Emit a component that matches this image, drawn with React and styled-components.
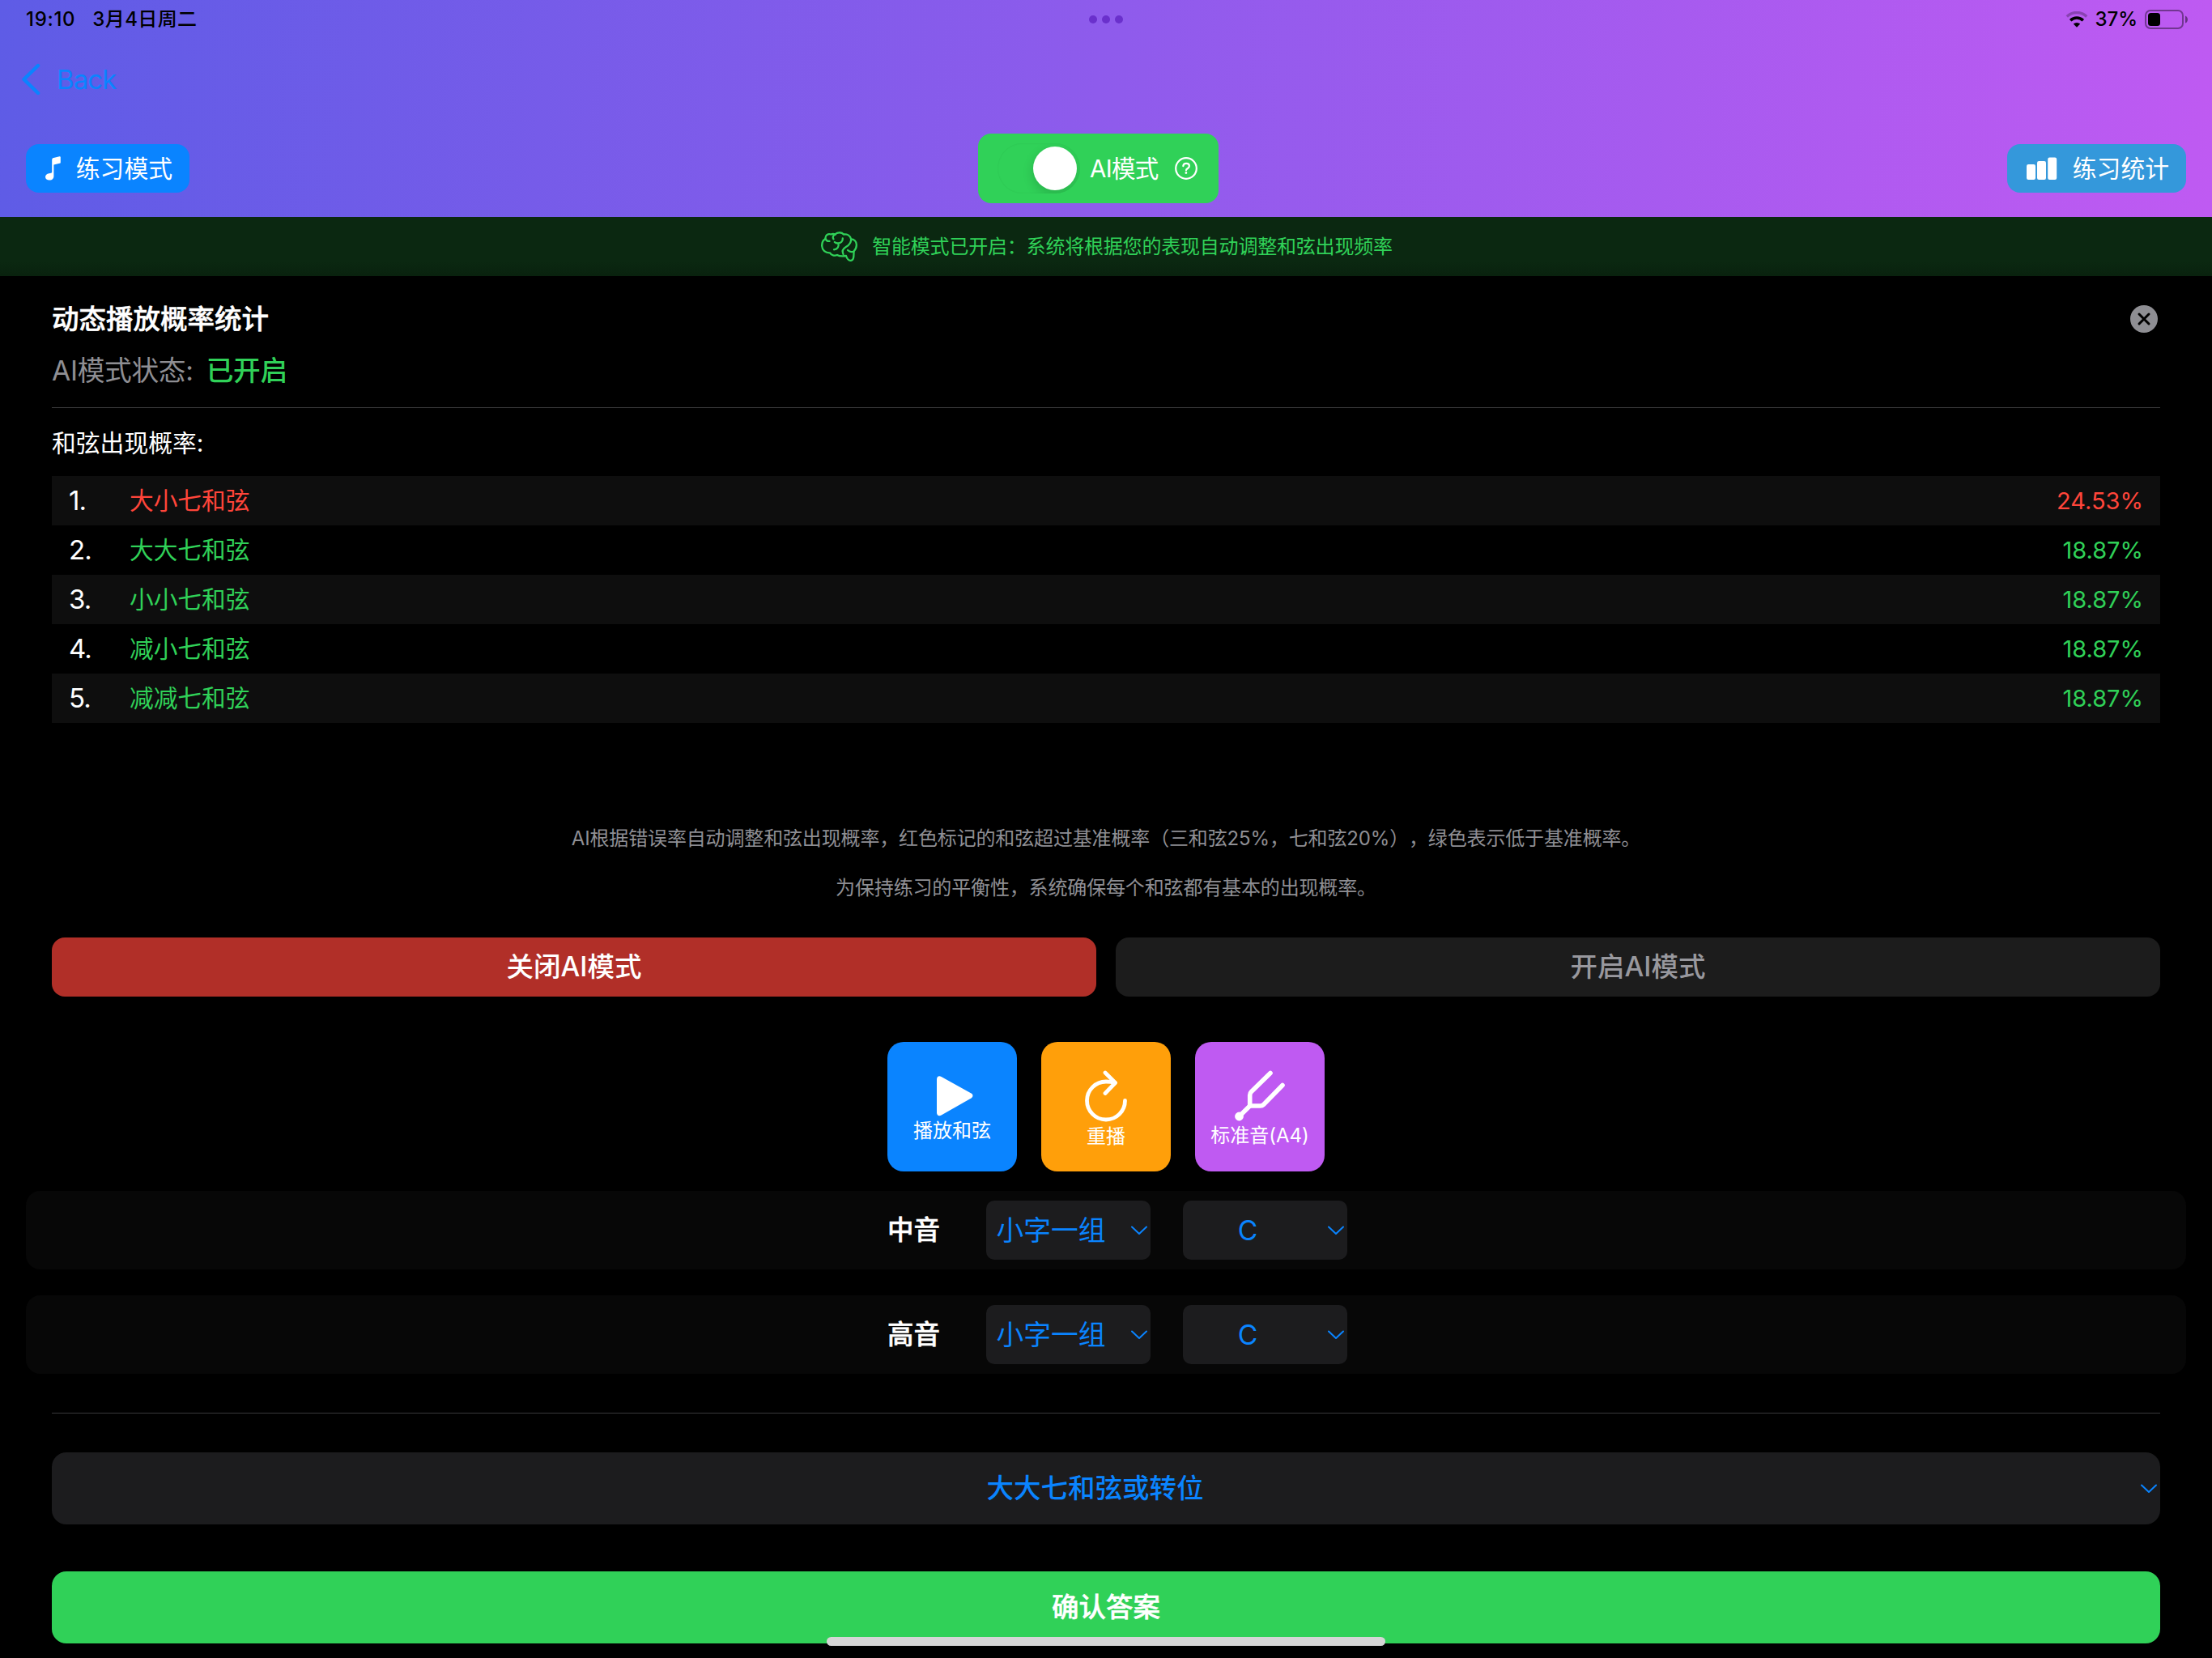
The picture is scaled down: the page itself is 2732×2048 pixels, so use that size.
import { useState } from "react";
import styled, { createGlobalStyle } from "styled-components";

const GlobalStyle = createGlobalStyle`
  * {
    box-sizing: border-box;
  }
  body {
    margin: 0;
    background: #000;
    font-family: Inter, "Noto Sans CJK SC", sans-serif;
    color: #fff;
  }
  button {
    border: none;
    padding: 0;
    margin: 0;
    font: inherit;
    color: inherit;
    background: none;
  }
  svg {
    display: block;
    flex: none;
  }
`;

const Screen = styled.div`
  position: relative;
  width: 2732px;
  height: 2048px;
  overflow: hidden;
  background: #000;
`;

const Header = styled.header`
  height: 268px;
  background: linear-gradient(95.6deg, #5e5ce6, #bf5af2);
`;

const StatusBar = styled.div`
  display: grid;
  grid-template-columns: 1fr auto 1fr;
  align-items: center;
  height: 48px;
  padding: 0 29px;
  color: #000;
  font-size: 24px;
  font-weight: 500;
  line-height: 48px;
`;

const StatusLeft = styled.div`
  display: flex;
  gap: 21px;
  padding-left: 3px;
  letter-spacing: 0.4px;
`;

const Clock = styled.span`
  letter-spacing: 0.7px;
`;

const StatusRight = styled.div`
  display: flex;
  justify-content: flex-end;
  align-items: center;
`;

const Battery = styled.span`
  margin: 0 9px 0 8px;
`;

const Dots = styled.div`
  display: flex;
  gap: 6px;
  span {
    width: 10px;
    height: 10px;
    border-radius: 50%;
    background: #6a30cc;
  }
`;

const NavBar = styled.nav`
  display: flex;
  align-items: center;
  height: 100px;
  padding-left: 26px;
`;

const BackButton = styled.button`
  display: flex;
  align-items: center;
  gap: 20px;
  color: #0a84ff;
  font-size: 33px;
  line-height: 40px;
  letter-spacing: -0.9px;
`;

const Toolbar = styled.div`
  display: flex;
  justify-content: space-between;
  align-items: center;
  height: 120px;
  padding: 0 32px;
`;

const ToolButton = styled.button`
  display: flex;
  align-items: center;
  justify-content: space-between;
  width: ${(props) => props.$width}px;
  height: 60px;
  padding: 0 21px 0 24px;
  border-radius: 16px;
  background: ${(props) => props.$color};
  font-size: 29.8px;
  line-height: 40px;
`;

const AiToggle = styled.button`
  display: flex;
  align-items: center;
  width: 297px;
  height: 86px;
  padding: 0 26px 0 24px;
  border-radius: 16px;
  background: #30d158;
  font-size: 29.5px;
  line-height: 40px;
`;

const Track = styled.span`
  display: flex;
  justify-content: ${(props) => (props.$on ? "flex-end" : "flex-start")};
  width: 102px;
  height: 62px;
  padding: 4px;
  margin-right: 12px;
  border-radius: 31px;
  background: #30d158;
  box-shadow: inset 0 0 2px rgba(0, 0, 0, 0.08);
  overflow: hidden;
`;

const Knob = styled.span`
  width: 54px;
  height: 54px;
  border-radius: 50%;
  background: #fff;
  box-shadow: 0 5px 14px rgba(0, 0, 0, 0.16);
`;

const ToggleLabel = styled.span`
  flex: 1;
  text-align: left;
  letter-spacing: -0.7px;
`;

const Banner = styled.div`
  display: flex;
  justify-content: center;
  align-items: center;
  gap: 18px;
  height: 73px;
  padding-left: 2px;
  background: linear-gradient(#0b2811 75%, #09220e);
  color: #30d158;
  font-size: 24px;
  line-height: 36px;
  letter-spacing: -0.2px;
`;

const Panel = styled.section`
  padding: 28px 64px 0;
`;

const TitleRow = styled.div`
  display: flex;
  justify-content: space-between;
  align-items: center;
  height: 50px;
  padding-right: 3px;
`;

const Title = styled.h2`
  margin: 0;
  font-size: 33.5px;
  font-weight: 500;
  line-height: 50px;
  -webkit-text-stroke: 0.5px currentColor;
`;

const AiStatus = styled.div`
  display: flex;
  gap: 16px;
  margin-top: 12px;
  font-size: 33.7px;
  line-height: 54px;
  color: #8e8e93;
  letter-spacing: -0.3px;
`;

const StatusValue = styled.span`
  color: #30d158;
  font-weight: 500;
`;

const Divider = styled.div`
  height: 1px;
  margin: ${(props) => props.$margin};
  background: #39393b;
`;

const SubTitle = styled.h3`
  margin: 22px 0 20px;
  font-size: 29.8px;
  font-weight: 400;
  line-height: 42px;
`;

const ChordRow = styled.div`
  display: flex;
  align-items: center;
  height: 61px;
  padding: 0 21px;
  font-size: 29.7px;
  line-height: 61px;
  color: ${(props) => (props.$high ? "#ff453a" : "#30d158")};

  &:nth-child(odd) {
    background: #0e0e0e;
  }
`;

const RowIndex = styled.span`
  width: 75px;
  font-size: 33px;
  letter-spacing: -1px;
  color: #fff;
`;

const Percent = styled.span`
  margin-left: auto;
  font-size: 29px;
`;

const Notes = styled.div`
  margin-top: 112px;
  text-align: center;
  text-spacing-trim: space-all;
  color: #8e8e93;
  font-size: 24px;
  line-height: 61px;
  letter-spacing: -0.15px;
`;

const ButtonRow = styled.div`
  display: flex;
  gap: 24px;
  margin-top: 31px;
`;

const ModeButton = styled.button`
  flex: 1;
  height: 73px;
  border-radius: 16px;
  font-size: 33.5px;
  font-weight: 500;
  line-height: 73px;
  background: ${(props) => (props.$danger ? "#b12f28" : "#1c1c1c")};
  color: ${(props) => (props.$danger ? "#fff" : "#98989e")};
`;

const Tiles = styled.div`
  display: flex;
  justify-content: center;
  gap: 30px;
  margin-top: 56px;
`;

const Tile = styled.button`
  display: flex;
  flex-direction: column;
  align-items: center;
  width: 160px;
  height: 160px;
  padding-top: ${(props) => props.$top}px;
  border-radius: 20px;
  background: ${(props) => props.$color};
  font-size: 24px;
  line-height: 36px;
  white-space: nowrap;
`;

const NoteRow = styled.div`
  display: flex;
  justify-content: center;
  align-items: center;
  height: 97px;
  margin: ${(props) => props.$top}px 32px 0;
  padding-left: 28px;
  border-radius: 18px;
  background: #070707;
`;

const NoteLabel = styled.span`
  width: 122px;
  font-size: 32.5px;
  font-weight: 500;
  line-height: 73px;
  -webkit-text-stroke: 0.5px currentColor;
`;

const Picker = styled.button`
  display: flex;
  align-items: center;
  gap: 18px;
  width: 203px;
  height: 73px;
  margin-right: ${(props) => (props.$last ? 0 : 40)}px;
  padding-right: 3px;
  border-radius: 10px;
  background: #1c1c1e;
  color: #0a84ff;
  font-size: 33.7px;
  line-height: 73px;
`;

const PickerText = styled.span`
  flex: 1;
  text-align: center;
`;

const Answer = styled.div`
  padding: 0 64px;
`;

const ChordSelect = styled(Picker)`
  gap: 2px;
  width: 100%;
  height: 89px;
  margin: 0;
  border-radius: 18px;
  font-size: 33.5px;
  font-weight: 500;
`;

const Confirm = styled.button`
  width: 100%;
  height: 89px;
  margin-top: 58px;
  border-radius: 18px;
  background: #30d158;
  font-size: 33.5px;
  font-weight: 500;
  line-height: 89px;
  -webkit-text-stroke: 0.5px currentColor;
`;

const HomeIndicator = styled.div`
  position: absolute;
  left: 50%;
  bottom: 15px;
  width: 690px;
  height: 11px;
  transform: translateX(-50%);
  border-radius: 6px;
  background: #d6d6d6;
`;

const chords = [
  { name: "大小七和弦", rate: "24.53%", high: true },
  { name: "大大七和弦", rate: "18.87%" },
  { name: "小小七和弦", rate: "18.87%" },
  { name: "减小七和弦", rate: "18.87%" },
  { name: "减减七和弦", rate: "18.87%" },
];

const Chevron = () => (
  <svg width="22" height="14" viewBox="0 0 22 14" fill="none">
    <path
      d="M2 2.5 11 11 20 2.5"
      stroke="currentColor"
      strokeWidth="2"
      strokeLinecap="round"
      strokeLinejoin="round"
    />
  </svg>
);

const WifiIcon = () => (
  <svg width="28" height="20" viewBox="0 0 28 20" fill="none">
    <path d="M1.8 6.4A17.6 17.6 0 0 1 26.2 6.4" stroke="#000" strokeOpacity=".26" strokeWidth="3.4" />
    <path d="M6.2 11.2A11.2 11.2 0 0 1 21.8 11.2" stroke="#000" strokeWidth="3.6" />
    <path d="M14 19.8 9.8 15.6a6.2 6.2 0 0 1 8.4 0Z" fill="#000" />
  </svg>
);

const BatteryIcon = () => (
  <svg width="54" height="24" viewBox="0 0 54 24" fill="none">
    <rect x="1" y="1" width="46" height="22" rx="6" stroke="#000" strokeOpacity=".4" strokeWidth="2" />
    <rect x="4" y="4" width="15" height="16" rx="3.5" fill="#000" />
    <path d="M50 7.4c4 1.6 4 7.6 0 9.2Z" fill="#000" fillOpacity=".45" />
  </svg>
);

const BackIcon = () => (
  <svg width="24" height="40" viewBox="0 0 24 40" fill="none">
    <path
      d="M21 3 3.5 20 21 37"
      stroke="currentColor"
      strokeWidth="4.4"
      strokeLinecap="round"
      strokeLinejoin="round"
    />
  </svg>
);

const MusicIcon = () => (
  <svg width="19" height="30" viewBox="0 0 19 30" fill="#fff">
    <path d="M8.2 4.6c0-1.6.6-2.4 2-2.7L17.4.2c.9-.2 1.4.2 1.4 1v6.2c0 .8-.4 1.2-1.2 1.4l-7.2 1.6v14c0 3.2-2.2 5.2-5.4 5.2-2.8 0-5-1.6-5-3.900 0-2.500 1.900-3.900 4.400-4.400l2.600-.5c.9-.2 1.200-.5 1.200-1.500Z" />
  </svg>
);

const BarsIcon = () => (
  <svg width="38" height="28" viewBox="0 0 38 28" fill="#fff">
    <rect x="0" y="9" width="11" height="19" rx="2.2" />
    <rect x="13" y="5" width="11" height="23" rx="2.2" />
    <rect x="26.2" y="0.5" width="11" height="27.5" rx="2.2" />
  </svg>
);

const HelpIcon = () => (
  <svg width="28" height="28" viewBox="0 0 28 28" fill="none" stroke="#fff" strokeLinecap="round">
    <circle cx="14" cy="14" r="12.8" strokeWidth="2.2" />
    <path
      d="M10.3 11.2c.2-2.2 1.7-3.3 3.8-3.3 2.2 0 3.8 1.2 3.8 3.1 0 1.5-.8 2.2-2 3-1.3.8-1.9 1.3-1.9 2.3"
      strokeWidth="2.2"
    />
    <circle cx="13.9" cy="19.5" r=".6" strokeWidth="1.6" />
  </svg>
);

const BrainIcon = () => (
  <svg
    width="45"
    height="37"
    viewBox="0 0 45 37"
    fill="none"
    stroke="currentColor"
    strokeWidth="2.3"
    strokeLinecap="round"
    strokeLinejoin="round"
  >
    <path d="M12.5 3.5C8.5 2 5 5 5.5 9 2 11 1 14.5 1.2 18c.3 5 4.200 8.500 9.800 8.300 1.500 3.200 6 3.800 9 2.700 2.500 1.500 6.500 1.800 11 1 1 3.200 2.500 5.800 5.500 5.800 3.500 0 4.200-3.300 4-11.300 2.600-2.500 3.500-5.500 3.300-8.500-.2-3.700-2.800-6.500-6.600-6.500-1.200-4.500-5.200-6.600-9.200-6-2.300-3-8.500-3-10.500.2-1.500-.9-3.500-.9-5-.2Z" />
    <path d="M17.5 3.7c-2.8 1-3.5 3.4-2 5.600M5.500 9c.8 2 2.500 3.200 5 2.900" />
    <path d="M26.8 8.3c.3 3.6-2.3 6-5.6 6.200-2 .1-3.500-.5-4.400-1.500M21.400 14.500c1 3.300-.5 7.500-5.400 7.800" />
    <path d="M37.2 9.5c-.2 5-2.7 7.500-6 9.300-3.700 2.200-5.700 5.500-3.700 9.200M40.500 24.500c-2.500 1-5.500.5-7.500-1.500" />
  </svg>
);

const CloseIcon = () => (
  <svg width="34" height="34" viewBox="0 0 34 34" fill="none">
    <circle cx="17" cy="17" r="17" fill="#8e8e93" />
    <path d="m11 11 12 12m0-12L11 23" stroke="#000" strokeWidth="3" strokeLinecap="round" />
  </svg>
);

const PlayIcon = () => (
  <svg width="51" height="50" viewBox="-6 0 51 50" fill="#fff">
    <path d="M0 4C0 .8 2.7-.6 5.600 1L42.500 21.600c2.600 1.500 2.600 4.300 0 5.800L5.600 48.500C2.700 50.100 0 48.700 0 45.500Z" />
  </svg>
);

const ReplayIcon = () => (
  <svg
    width="54"
    height="64"
    viewBox="0 0 54 64"
    fill="none"
    stroke="#fff"
    strokeWidth="4.8"
    strokeLinecap="round"
    strokeLinejoin="round"
  >
    <path d="M50.5 37.5A23.5 23.5 0 1 1 27 14c4 0 7 .3 11 1.5" />
    <path d="M26 3 38.5 15.5 26 28.5" />
  </svg>
);

const ForkIcon = () => (
  <svg
    width="62"
    height="63"
    viewBox="0 0 62 63"
    fill="none"
    stroke="#fff"
    strokeWidth="5.6"
    strokeLinecap="round"
    strokeLinejoin="round"
  >
    <path d="M44 3.5 20.5 26.5C19.2 27.8 18.7 29 18.7 30.7V44H31.5c1.8 0 3-.5 4.3-1.8L59 18.5" />
    <path d="M18.7 44 6 56.5" />
    <circle cx="5.5" cy="57" r="2.6" />
  </svg>
);

function PitchRow({ label, top }) {
  return (
    <NoteRow $top={top}>
      <NoteLabel>{label}</NoteLabel>
      <Picker>
        <PickerText>小字一组</PickerText>
        <Chevron />
      </Picker>
      <Picker $last>
        <PickerText>C</PickerText>
        <Chevron />
      </Picker>
    </NoteRow>
  );
}

function App() {
  const [aiMode, setAiMode] = useState(true);
  return (
    <>
      <GlobalStyle />
      <Screen>
        <Header>
          <StatusBar>
            <StatusLeft>
              <Clock>19:10</Clock>
              <span>3月4日周二</span>
            </StatusLeft>
            <Dots>
              <span />
              <span />
              <span />
            </Dots>
            <StatusRight>
              <WifiIcon />
              <Battery>37%</Battery>
              <BatteryIcon />
            </StatusRight>
          </StatusBar>
          <NavBar>
            <BackButton>
              <BackIcon />
              Back
            </BackButton>
          </NavBar>
          <Toolbar>
            <ToolButton $width={202} $color="#0a84ff">
              <MusicIcon />
              练习模式
            </ToolButton>
            <AiToggle onClick={() => setAiMode(!aiMode)}>
              <Track $on={aiMode}>
                <Knob />
              </Track>
              <ToggleLabel>AI模式</ToggleLabel>
              <HelpIcon />
            </AiToggle>
            <ToolButton $width={221} $color="#3498db">
              <BarsIcon />
              练习统计
            </ToolButton>
          </Toolbar>
        </Header>

        <Banner>
          <BrainIcon />
          <span>智能模式已开启：系统将根据您的表现自动调整和弦出现频率</span>
        </Banner>

        <Panel>
          <TitleRow>
            <Title>动态播放概率统计</Title>
            <button>
              <CloseIcon />
            </button>
          </TitleRow>
          <AiStatus>
            AI模式状态:
            <StatusValue>{aiMode ? "已开启" : "已关闭"}</StatusValue>
          </AiStatus>
          <Divider $margin="18px 0 0" />
          <SubTitle>和弦出现概率:</SubTitle>
          <div>
            {chords.map((chord, i) => (
              <ChordRow key={chord.name} $high={chord.high}>
                <RowIndex>{i + 1}.</RowIndex>
                <span>{chord.name}</span>
                <Percent>{chord.rate}</Percent>
              </ChordRow>
            ))}
          </div>
          <Notes>
            <div>
              AI根据错误率自动调整和弦出现概率，红色标记的和弦超过基准概率（三和弦25%，七和弦20%），绿色表示低于基准概率。
            </div>
            <div>为保持练习的平衡性，系统确保每个和弦都有基本的出现概率。</div>
          </Notes>
          <ButtonRow>
            <ModeButton $danger onClick={() => setAiMode(false)}>
              关闭AI模式
            </ModeButton>
            <ModeButton onClick={() => setAiMode(true)}>开启AI模式</ModeButton>
          </ButtonRow>
        </Panel>

        <Tiles>
          <Tile $color="#0a84ff" $top={42}>
            <PlayIcon />
            播放和弦
          </Tile>
          <Tile $color="#ff9f0a" $top={35}>
            <ReplayIcon />
            重播
          </Tile>
          <Tile $color="#bf5af2" $top={35}>
            <ForkIcon />
            标准音(A4)
          </Tile>
        </Tiles>

        <PitchRow label="中音" top={24} />
        <PitchRow label="高音" top={32} />

        <Answer>
          <Divider $margin="48px 0" />
          <ChordSelect>
            <PickerText>大大七和弦或转位</PickerText>
            <Chevron />
          </ChordSelect>
          <Confirm>确认答案</Confirm>
        </Answer>
        <HomeIndicator />
      </Screen>
    </>
  );
}

export default App;
